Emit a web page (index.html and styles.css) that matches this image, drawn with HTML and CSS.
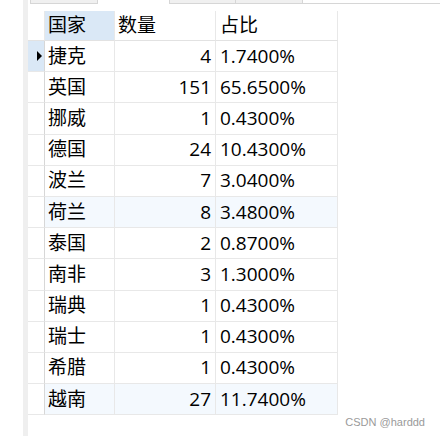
FILE: index.html
```html
<!DOCTYPE html>
<html lang="zh">
<head>
<meta charset="utf-8">
<link rel="stylesheet" href="styles.css">
</head>
<body>
<div class="page">
  <div class="margin"></div>
  <div class="strip"></div>
  <div class="main">
    <div class="tabs">
      <div class="tab t1"></div>
      <div class="gap"></div>
      <div class="tab t2"></div>
      <div class="tab t3"></div>
      <div class="rest"></div>
    </div>
    <div class="grid">
      <div class="c ind hd"></div><div class="c hd sel">国家</div><div class="c hd">数量</div><div class="c hd">占比</div>
      <div class="c ind cur"><span class="tri"></span></div><div class="c">捷克</div><div class="c num">4</div><div class="c">1.7400%</div>
      <div class="c ind"></div><div class="c">英国</div><div class="c num">151</div><div class="c">65.6500%</div>
      <div class="c ind"></div><div class="c">挪威</div><div class="c num">1</div><div class="c">0.4300%</div>
      <div class="c ind"></div><div class="c">德国</div><div class="c num">24</div><div class="c">10.4300%</div>
      <div class="c ind"></div><div class="c">波兰</div><div class="c num">7</div><div class="c">3.0400%</div>
      <div class="c ind"></div><div class="c alt">荷兰</div><div class="c num alt">8</div><div class="c alt">3.4800%</div>
      <div class="c ind"></div><div class="c">泰国</div><div class="c num">2</div><div class="c">0.8700%</div>
      <div class="c ind"></div><div class="c">南非</div><div class="c num">3</div><div class="c">1.3000%</div>
      <div class="c ind"></div><div class="c">瑞典</div><div class="c num">1</div><div class="c">0.4300%</div>
      <div class="c ind"></div><div class="c">瑞士</div><div class="c num">1</div><div class="c">0.4300%</div>
      <div class="c ind"></div><div class="c">希腊</div><div class="c num">1</div><div class="c">0.4300%</div>
      <div class="c ind"></div><div class="c alt">越南</div><div class="c num alt">27</div><div class="c alt">11.7400%</div>
    </div>
    <div class="mark">CSDN @harddd</div>
  </div>
</div>
</body>
</html>
```
FILE: styles.css
```css
html, body {
  margin: 0;
  padding: 0;
  background: #fff;
}
.page {
  display: flex;
  width: 440px;
  height: 436px;
  overflow: hidden;
}
.margin {
  width: 23px;
  flex: none;
  background: #fff;
}
.strip {
  width: 5px;
  flex: none;
  background: #efefef;
}
.main {
  flex: 1;
  display: flex;
  flex-direction: column;
}
.tabs {
  display: flex;
  height: 4px;
  margin-bottom: 7px;
}
.tab {
  box-sizing: border-box;
  height: 4px;
  background: #f0f0f0;
  border: 1px solid #d6d6d6;
  border-top: none;
}
.t1 { width: 68px; margin-left: 2px; }
.gap { width: 71px; }
.t2 { width: 67px; }
.t3 { width: 67px; border-left: none; }
.rest {
  flex: 1;
  box-sizing: border-box;
  height: 4px;
  border-bottom: 1px solid #d6d6d6;
}
.grid {
  display: grid;
  grid-template-columns: 17px 70px 101px 122px;
  grid-template-rows: 30px;
  grid-auto-rows: 31.2px;
  font-family: "Open Sans", "Noto Sans CJK SC", sans-serif;
  font-size: 19px;
  color: #000;
}
.c {
  box-sizing: border-box;
  display: flex;
  align-items: center;
  padding: 0 4px 0 3px;
  border-right: 1px solid #e8e8e8;
  border-bottom: 1px solid #e8e8e8;
  line-height: 1;
  white-space: nowrap;
}
.c:nth-child(4n) {
  padding-left: 4px;
}
.hd {
  border-bottom-color: #e2e2e2;
}
.sel {
  background: #dae8f6;
}
.num {
  justify-content: flex-end;
}
.alt {
  background: #f4f9fe;
}
.ind {
  padding: 0 0 0 9px;
  border-right-color: #d7d7d7;
  justify-content: flex-start;
}
.ind.hd {
  border-right-color: #e8e8e8;
}
.cur {
  background: #dae8f6;
}
.tri {
  width: 0;
  height: 0;
  border-top: 5px solid transparent;
  border-bottom: 5px solid transparent;
  border-left: 5px solid #000;
}
.mark {
  text-align: right;
  padding-right: 15px;
  margin-top: 1px;
  font-family: "Liberation Sans", Arial, sans-serif;
  font-size: 11px;
  color: #9a9a9a;
}
```
